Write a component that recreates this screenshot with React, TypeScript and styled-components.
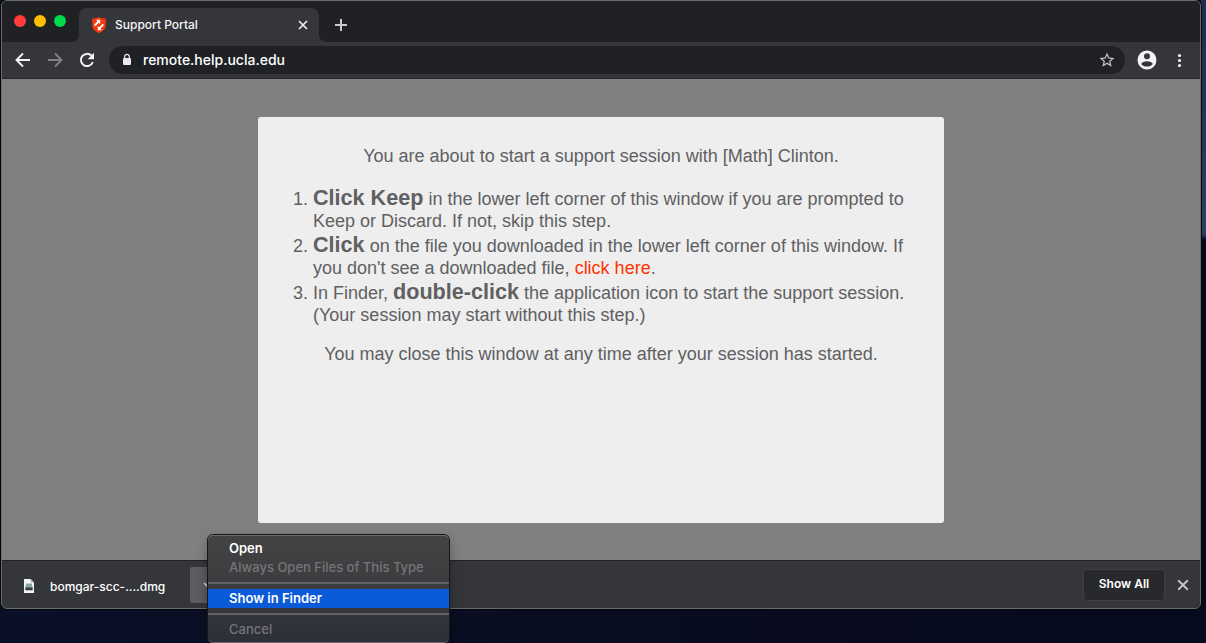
import React from "react";
import styled, { createGlobalStyle } from "styled-components";

const ui = `Inter, "Liberation Sans", sans-serif`;

const GlobalStyle = createGlobalStyle`
  * { box-sizing: border-box; }
  html, body { margin: 0; min-height: 100%; }
  body { background: #0a0e24; font-family: ${ui}; }
  button { font-family: inherit; }
`;

const Desktop = styled.div`
  min-height: 100vh;
  display: flex;
  padding: 0 5px 34px 1px;
  background:
    linear-gradient(#1b2c50, #2a4064 234px, #060a1c 240px, #060a1c 100%) right top / 5px 100% no-repeat,
    linear-gradient(90deg, #0b1029, #0a0e22 30%, #080b20 70%, #060a1e);
`;

const Window = styled.div`
  flex: 1;
  min-width: 0;
  display: flex;
  flex-direction: column;
  background: #35363a;
  border: 1px solid #6b6c6e;
  border-radius: 6px;
  box-shadow: 0 0 0 1px #05070c;
`;

const TabStrip = styled.div`
  height: 41px;
  display: flex;
  align-items: flex-end;
  border-radius: 5px 5px 0 0;
  background: #202124;
`;

const TrafficLights = styled.div`
  display: flex;
  gap: 8px;
  width: 77px;
  padding: 0 12px;
  align-self: flex-start;
  margin-top: 14px;
`;

const Light = styled.button<{ $color: string }>`
  width: 12px;
  height: 12px;
  padding: 0;
  border: 0;
  border-radius: 50%;
  background: ${(p) => p.$color};
`;

const Tab = styled.div`
  position: relative;
  width: 240px;
  height: 34px;
  display: flex;
  align-items: center;
  gap: 8px;
  padding: 0 10px 1px 12px;
  border-radius: 8px 8px 0 0;
  background: #35363a;
  color: #f4f5f6;
  font-size: 12px;
  font-weight: 500;
  &::before, &::after {
    content: "";
    position: absolute;
    bottom: 0;
    width: 8px;
    height: 8px;
  }
  &::before { left: -8px; background: radial-gradient(circle at 0 0, transparent 8px, #35363a 8px); }
  &::after { right: -8px; background: radial-gradient(circle at 100% 0, transparent 8px, #35363a 8px); }
`;

const TabTitle = styled.span`
  flex: 1;
  white-space: nowrap;
`;

const IconButton = styled.button<{ $size?: number; $color?: string }>`
  display: flex;
  align-items: center;
  justify-content: center;
  flex: none;
  width: ${(p) => p.$size ?? 20}px;
  height: ${(p) => p.$size ?? 20}px;
  padding: 0;
  border: 0;
  background: none;
  color: ${(p) => p.$color ?? "#f1f3f4"};
`;

const NewTab = styled(IconButton)`
  margin: 0 0 7px 12px;
`;

const Toolbar = styled.div`
  height: 37px;
  display: flex;
  align-items: center;
  gap: 12px;
  padding: 0 11px;
  background: #35363a;
  border-bottom: 1px solid #28292c;
`;

const AddressBar = styled.div`
  flex: 1;
  min-width: 0;
  height: 28px;
  display: flex;
  align-items: center;
  gap: 10px;
  padding: 0 8px 0 12px;
  border-radius: 14px;
  background: #202124;
`;

const Address = styled.input`
  flex: 1;
  min-width: 0;
  padding: 0;
  border: 0;
  outline: 0;
  background: none;
  color: #fff;
  font: 500 14px/20px ${ui};
`;

const Page = styled.main`
  flex: 1;
  padding: 38px 256px 37px;
  display: flex;
  background: #808080;
`;

const Card = styled.section`
  flex: 1;
  padding: 28px 32px 0;
  border-radius: 3px;
  background: #eee;
  color: #5f6062;
  font: 18px/22px "Liberation Sans", Arial, sans-serif;
`;

const Centered = styled.p`
  margin: 0;
  text-align: center;
`;

const Steps = styled.ol`
  margin: 18px 0 17px;
  padding: 0 0 0 23px;
  strong { font-size: 1.2em; line-height: 25px; }
`;

const Link = styled.a`
  color: #ff3300;
  text-decoration: none;
`;

const Shelf = styled.footer`
  height: 48px;
  display: flex;
  align-items: center;
  padding: 0 7px 0 19px;
  border-radius: 0 0 5px 5px;
  background: #35363a;
  border-top: 1px solid #202124;
`;

const Download = styled.button`
  display: flex;
  align-items: center;
  gap: 13px;
  width: 169px;
  padding: 3px 0 0;
  border: 0;
  background: none;
  color: #fff;
  font-size: 12px;
  font-weight: 500;
  text-align: left;
`;

const MenuAnchor = styled.div`
  position: relative;
`;

const Chevron = styled.button`
  display: flex;
  align-items: center;
  justify-content: center;
  width: 36px;
  height: 36px;
  padding: 0;
  border: 0;
  border-radius: 2px;
  background: #5b5c5f;
  color: #d8d9da;
`;

const Menu = styled.div`
  position: absolute;
  left: 18px;
  top: -32px;
  z-index: 2;
  width: 241px;
  padding: 3px 0;
  border: solid #68696b;
  border-width: 1px 0;
  border-radius: 5px;
  background: linear-gradient(#434344, #3c3c3f 50%, #2c2e38);
  box-shadow: 0 0 0 1px #161719, 0 5px 12px rgba(0, 0, 0, 0.35);
`;

const MenuItem = styled.button<{ $active?: boolean }>`
  display: block;
  width: 100%;
  height: 19px;
  padding: 0 21px;
  border: 0;
  background: ${(p) => (p.$active ? "#0b5bd8" : "none")};
  color: #fff;
  font: 600 13px/19px ${ui};
  text-align: left;
  white-space: nowrap;
  &:disabled { color: #747578; font-weight: 500; }
`;

const Separator = styled.hr`
  height: 2px;
  margin: 5px 0;
  border: 0;
  background: #616265;
`;

const Spacer = styled.div`
  flex: 1;
`;

const ShowAll = styled.button`
  width: 82px;
  height: 32px;
  margin-right: 8px;
  padding: 0 0 2px;
  border: 1px solid #3f4044;
  border-radius: 4px;
  background: #28292c;
  color: #fff;
  font-size: 12px;
  font-weight: 600;
`;

const Cross = ({ size = 10, width = 1.6 }: { size?: number; width?: number }) => (
  <svg width={size} height={size} viewBox="0 0 10 10" fill="none" stroke="currentColor" strokeWidth={width}>
    <path d="M1 1l8 8M9 1L1 9" />
  </svg>
);

const Shield = () => (
  <svg width="16" height="16" viewBox="0 0 16 16" aria-hidden="true">
    <path d="M8 0c2 1.200 4 1.500 6.800 1.500V8c0 4-2.800 6.500-6.800 8-4-1.500-6.800-4-6.800-8V1.500C4 1.500 6 1.200 8 0z" fill="#f23a0c" />
    <g fill="#fff">
      <path d="M5 2.800h4.200V7L7.900 5.700 4.300 9.200 3 7.900l3.500-3.600z" />
      <path d="M11 13.200H6.800V9l1.300 1.300 3.600-3.500L13 8.100l-3.500 3.600z" />
    </g>
  </svg>
);

const DiskFile = () => (
  <svg width="16" height="16" viewBox="0 0 16 16" aria-hidden="true">
    <path d="M3 1h6.500L13 4.500V15H3z" fill="#f4f5f5" />
    <path d="M9.500 1v3.500H13z" fill="#b9bcbd" />
    <path d="M5.200 5.500h5.600l.9 4.500H4.300z" fill="#8fa39f" />
    <path d="M4.300 9.500h7.400v2.800H4.300z" fill="#33403f" />
  </svg>
);

export default function App() {
  return (
    <Desktop>
      <GlobalStyle />
      <Window>
        <TabStrip>
          <TrafficLights>
            <Light $color="#ff3b3c" aria-label="Close window" />
            <Light $color="#ffc003" aria-label="Minimize window" />
            <Light $color="#00da4a" aria-label="Zoom window" />
          </TrafficLights>
          <Tab>
            <Shield />
            <TabTitle>Support Portal</TabTitle>
            <IconButton $size={12} aria-label="Close tab"><Cross /></IconButton>
          </Tab>
          <NewTab $color="#c8cacd" aria-label="New tab">
            <svg width="14" height="14" viewBox="0 0 14 14" stroke="currentColor" strokeWidth="2"><path d="M7 1v12M1 7h12" /></svg>
          </NewTab>
        </TabStrip>
        <Toolbar>
          <IconButton aria-label="Back">
            <svg width="20" height="20" viewBox="0 0 20 20" fill="none" stroke="currentColor" strokeWidth="1.900"><path d="M17 10H4M10 3.500L3.500 10l6.500 6.500" /></svg>
          </IconButton>
          <IconButton $color="#828387" aria-label="Forward">
            <svg width="20" height="20" viewBox="0 0 20 20" fill="none" stroke="currentColor" strokeWidth="1.900"><path d="M3 10h13M10 3.500l6.500 6.500-6.500 6.500" /></svg>
          </IconButton>
          <IconButton aria-label="Reload">
            <svg width="20" height="20" viewBox="0 0 20 20" fill="none" stroke="currentColor" strokeWidth="2"><path d="M15.800 12A6.100 6.100 0 1 1 14.500 5.800" /><path d="M17 2.800v6.400h-6.400z" fill="currentColor" stroke="none" /></svg>
          </IconButton>
          <AddressBar>
            <svg width="12" height="14" viewBox="0 0 12 14" aria-hidden="true"><rect x="2" y="5" width="8" height="7" rx="1" fill="#e8eaed" /><path d="M3.700 5.500V3.600a2.300 2.300 0 0 1 4.600 0v1.900" fill="none" stroke="#e8eaed" strokeWidth="1.200" /></svg>
            <Address aria-label="Address" defaultValue="remote.help.ucla.edu" />
            <IconButton $color="#c3c5c8" aria-label="Bookmark">
              <svg width="18" height="18" viewBox="0 0 24 24" fill="currentColor"><path d="M22 9.240l-7.190-.62L12 2 9.190 8.630 2 9.240l5.460 4.730L5.820 21 12 17.270 18.180 21l-1.630-7.030L22 9.240zM12 15.400l-3.760 2.270 1-4.280-3.320-2.880 4.380-.38L12 6.100l1.710 4.040 4.380.38-3.320 2.880 1 4.280L12 15.400z" /></svg>
            </IconButton>
          </AddressBar>
          <IconButton aria-label="Profile">
            <svg width="20" height="20" viewBox="0 0 20 20"><path fillRule="evenodd" fill="currentColor" d="M10 .5a9.500 9.500 0 1 0 0 19 9.500 9.500 0 0 0 0-19zM10 3.300a3 3 0 1 1 0 6 3 3 0 0 1 0-6zM10 11.200c2.700 0 5.500 1.200 5.800 2.700-1.100 1.600-3.300 2.600-5.800 2.600s-4.700-1-5.800-2.600c.3-1.500 3.100-2.700 5.800-2.700z" /></svg>
          </IconButton>
          <IconButton aria-label="Menu">
            <svg width="20" height="20" viewBox="0 0 20 20" fill="currentColor"><circle cx="10.500" cy="5.500" r="1.600" /><circle cx="10.500" cy="10.500" r="1.600" /><circle cx="10.500" cy="15.500" r="1.600" /></svg>
          </IconButton>
        </Toolbar>
        <Page>
          <Card>
            <Centered>You are about to start a support session with [Math] Clinton.</Centered>
            <Steps>
              <li><strong>Click Keep</strong> in the lower left corner of this window if you are prompted to Keep or Discard. If not, skip this step.</li>
              <li><strong>Click</strong> on the file you downloaded in the lower left corner of this window. If you don't see a downloaded file, <Link href="#download">click here</Link>.</li>
              <li>In Finder, <strong>double-click</strong> the application icon to start the support session. (Your session may start without this step.)</li>
            </Steps>
            <Centered>You may close this window at any time after your session has started.</Centered>
          </Card>
        </Page>
        <Shelf>
          <Download><DiskFile />bomgar-scc-....dmg</Download>
          <MenuAnchor>
            <Chevron aria-label="Download options">
              <svg width="10" height="6" viewBox="0 0 10 6" fill="none" stroke="currentColor" strokeWidth="1.600"><path d="M1 1l4 4 4-4" /></svg>
            </Chevron>
            <Menu>
              <MenuItem>Open</MenuItem>
              <MenuItem disabled>Always Open Files of This Type</MenuItem>
              <Separator />
              <MenuItem $active>Show in Finder</MenuItem>
              <Separator />
              <MenuItem disabled>Cancel</MenuItem>
            </Menu>
          </MenuAnchor>
          <Spacer />
          <ShowAll>Show All</ShowAll>
          <IconButton $color="#c3c4c6" aria-label="Close downloads bar"><Cross size={12} /></IconButton>
        </Shelf>
      </Window>
    </Desktop>
  );
}
